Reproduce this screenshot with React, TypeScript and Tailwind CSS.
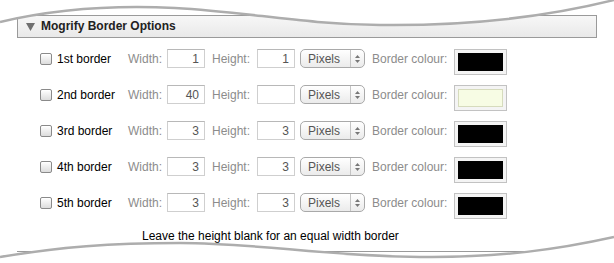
const rows = [
    { label: "1st border", width: "1", height: "1", colour: "black" },
    { label: "2nd border", width: "40", height: "", colour: "pale" },
    { label: "3rd border", width: "3", height: "3", colour: "black" },
    { label: "4th border", width: "3", height: "3", colour: "black" },
    { label: "5th border", width: "3", height: "3", colour: "black" },
]

const Checkbox = () => (
    <span className="mt-[4px] block w-[12px] h-[12px] rounded-[2px] border border-[#8a8a8a] bg-gradient-to-b from-white to-[#dcdcdc] shadow-[inset_0_1px_0_#fff]" />
)

const NumberBox = ({ value }: { value: string }) => (
    <span className="block w-[38px] h-[19px] border border-[#cfcfcf] border-t-[#b8b8b8] bg-white text-right pr-[5px] text-[#555] leading-[18px]">{value}</span>
)

const UnitSelect = () => (
    <span className="flex w-[65px] h-[19px] rounded-[5px] border border-[#a9a9a9] bg-gradient-to-b from-white to-[#ebebeb] text-[#555]">
        <span className="flex-1 pl-[7px] leading-[18px]">Pixels</span>
        <span className="w-[14px] border-l border-[#c4c4c4] flex flex-col items-center justify-center gap-[2px]">
            <svg width="5" height="3" viewBox="0 0 5 3"><path d="M0 3 L2.5 0 L5 3 Z" fill="#777" /></svg>
            <svg width="5" height="3" viewBox="0 0 5 3"><path d="M0 0 L2.5 3 L5 0 Z" fill="#777" /></svg>
        </span>
    </span>
)

const Swatch = ({ colour }: { colour: string }) => (
    <span className="block w-[53px] h-[26px] border border-[#c2c2c2] bg-[#f4f4f4] p-[3px]">
        {colour === "black"
            ? <span className="block w-full h-full bg-black" />
            : <span className="block w-full h-full bg-[#f7fce4] border border-[#d6dbbd]" />}
    </span>
)

const App = () => {
    return (
        <div className="relative w-[614px] h-[263px] overflow-hidden bg-white text-[12px] font-['Liberation_Sans',Arial,sans-serif]">
            <div className="ml-[17px] mt-[15px] w-[580px]">
                <div className="h-[23px] border border-[#9a9a9a] bg-gradient-to-b from-[#f7f7f7] to-[#e9e9e9] flex items-center">
                    <svg width="9" height="8" viewBox="0 0 9 8" className="ml-[8px] mt-[1px]"><path d="M0 0 L9 0 L4.5 8 Z" fill="#6f6f6f" /></svg>
                    <span className="ml-[6px] font-bold text-[#222] leading-[21px]">Mogrify Border Options</span>
                </div>
                <div className="pt-[11px] border-b border-[#9a9a9a] h-[214px]">
                    {rows.map((row) => (
                        <div key={row.label} className="flex items-start h-[36px] leading-[20px]">
                            <div className="ml-[23px]"><Checkbox /></div>
                            <span className="ml-[5px] w-[71px] text-black">{row.label}</span>
                            <span className="w-[39px] text-[#8c8c8c]">Width:</span>
                            <NumberBox value={row.width} />
                            <span className="ml-[7px] w-[45px] text-[#8c8c8c]">Height:</span>
                            <NumberBox value={row.height} />
                            <span className="ml-[5px]"><UnitSelect /></span>
                            <span className="ml-[7px] w-[82px] text-[#8c8c8c]">Border colour:</span>
                            <Swatch colour={row.colour} />
                        </div>
                    ))}
                    <p className="ml-[125px] leading-[14px] text-black">Leave the height blank for an equal width border</p>
                </div>
            </div>

            <svg className="absolute left-0 top-0" width="614" height="40" viewBox="0 0 614 40">
                <path d="M0 22 C 55 9 115 5 175 8 C 250 12 300 24 380 25 C 470 26 550 16 614 0 L614 0 L0 0 Z" fill="#fff" />
                <path d="M0 22 C 55 9 115 5 175 8 C 250 12 300 24 380 25 C 470 26 550 16 614 0" fill="none" stroke="#adadad" strokeWidth="2.5" />
            </svg>
            <svg className="absolute left-0 bottom-0" width="614" height="40" viewBox="0 223 614 40">
                <path d="M0 257 C 60 247 110 243 180 243 C 260 243 320 256 420 257 C 500 258 560 249 614 237 L614 263 L0 263 Z" fill="#fff" />
                <path d="M0 257 C 60 247 110 243 180 243 C 260 243 320 256 420 257 C 500 258 560 249 614 237" fill="none" stroke="#adadad" strokeWidth="2.5" />
            </svg>
        </div>
    )
}

export default App
